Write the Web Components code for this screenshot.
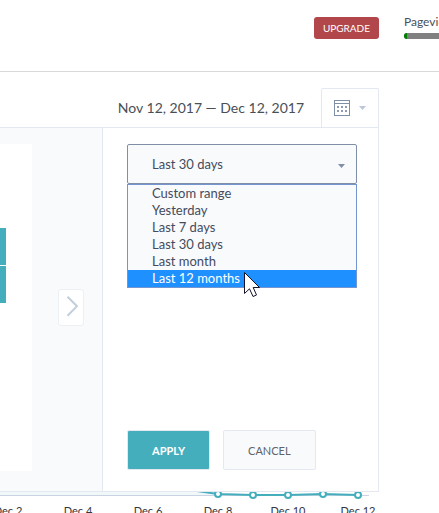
<!DOCTYPE html>
<html lang="en">
<head>
<meta charset="utf-8">
<meta name="viewport" content="width=device-width, initial-scale=1">
<title>Overview</title>
<style>
    html, body {
        margin: 0;
        min-height: 100%;
        overflow: hidden;
    }

    body {
        --line: #e3e8f1;
        --pale: #f8fafc;
        --teal: #45aebd;
        --slate: #7f8fa6;
        background: #fff;
        color: #4a4f57;
        font: 13px/17px Lato, "Open Sans", sans-serif;
    }
</style>
</head>
<body>
<app-topbar>
    <app-usage slot="usage" label="Pageviews" value="3"></app-usage>
</app-topbar>
<date-picker>
    <span slot="range">Nov 12, 2017 — Dec 12, 2017</span>
    <calendar-pane slot="calendar"></calendar-pane>
    <range-form slot="form"></range-form>
</date-picker>
<traffic-chart></traffic-chart>

<script>
function makeTemplate(html) {
    const template = document.createElement('template');
    template.innerHTML = html;
    return template;
}

class BaseElement extends HTMLElement {
    constructor() {
        super();
        this.attachShadow({mode: 'open'});
        this.shadowRoot.appendChild(this.constructor.template.content.cloneNode(true));
    }
}

class AppTopbar extends BaseElement {
    static template = makeTemplate(`
        <style>
            :host {
                display: flex;
                justify-content: flex-end;
                align-items: flex-start;
                gap: 25px;
                height: 54px;
                padding-top: 17px;
                border-bottom: 1px solid #d8dada;
                overflow: hidden;
            }

            button {
                height: 22px;
                padding: 0 9px;
                border: 0;
                border-radius: 3px;
                background: #b2474b;
                color: #fff;
                font: 10px/22px Lato, sans-serif;
                cursor: pointer;
            }

            .usage {
                width: 35px;
                margin-top: -4px;
            }
        </style>
        <button type="button">UPGRADE</button>
        <div class="usage"><slot name="usage"></slot></div>
    `);
}

class AppUsage extends BaseElement {
    static template = makeTemplate(`
        <style>
            :host {
                display: block;
                width: 160px;
            }

            label {
                display: block;
                font-size: 12px;
                line-height: 17px;
            }

            progress {
                appearance: none;
                display: block;
                width: 100%;
                height: 6px;
                margin-top: 3px;
                border: 0;
                border-radius: 3px;
                overflow: hidden;
            }

            progress::-webkit-progress-bar {background: #808080;}

            progress::-webkit-progress-value {background: #008000;}
        </style>
        <label for="used"></label>
        <progress id="used" max="160"></progress>
    `);

    connectedCallback() {
        this.shadowRoot.querySelector('label').textContent = this.getAttribute('label');
        this.shadowRoot.querySelector('progress').value = Number(this.getAttribute('value'));
    }
}

class DatePicker extends BaseElement {
    static template = makeTemplate(`
        <style>
            :host {
                display: block;
                position: relative;
                z-index: 1;
                margin: 16px 60px 0 0;
            }

            header {
                display: flex;
                justify-content: flex-end;
                align-items: center;
                gap: 17px;
                font-size: 14px;
                white-space: nowrap;
            }

            .toggle {
                display: flex;
                align-items: center;
                gap: 9px;
                height: 39px;
                padding: 0 12px;
                border: 1px solid var(--line);
                border-bottom: 0;
                border-radius: 2px 2px 0 0;
                background: #fff;
                cursor: pointer;
            }

            /* the panel floats above the chart */
            .panel {
                position: absolute;
                top: 100%;
                left: 0;
                right: 0;
                display: flex;
                border: 1px solid var(--line);
                border-left: 0;
                background: #fff;
            }

            slot[name="calendar"] {
                display: block;
                flex: 1;
                min-width: 0;
            }

            slot[name="form"] {
                display: block;
                border-left: 1px solid var(--line);
            }
        </style>
        <header>
            <slot name="range"></slot>
            <button class="toggle" type="button" aria-label="Choose dates">
                <svg width="16" height="16" viewBox="0 0 16 16" shape-rendering="crispEdges">
                    <path d="M.5 .5h15v15H.5zM0 3.500h16" fill="none" stroke="#7f8fa6"/>
                    <path d="M3 6h2v2H3zM7 6h2v2H7zM11 6h2v2h-2zM3 10h2v2H3zM7 10h2v2H7zM11 10h2v2h-2z" fill="#8d9bb0"/>
                </svg>
                <svg width="7" height="4" viewBox="0 0 7 4"><path d="M0 0h7L3.500 4z" fill="#bcc7d8"/></svg>
            </button>
        </header>
        <div class="panel">
            <slot name="calendar"></slot>
            <slot name="form"></slot>
        </div>
    `);
}

class CalendarPane extends BaseElement {
    static template = makeTemplate(`
        <style>
            :host {
                display: flex;
                align-items: center;
                justify-content: space-between;
                box-sizing: border-box;
                height: 100%;
                padding: 16px 18px 20px 0;
                background: var(--pale);
            }

            .month {
                display: flex;
                flex-direction: column;
                align-self: stretch;
                gap: 1px;
                flex: 1;
                margin-right: 26px;
                padding: 84px 26px 0 0;
                background: #fff;
            }

            .day {
                height: 37px;
                background: var(--teal);
            }

            button {
                width: 26px;
                height: 37px;
                padding: 0;
                border: 1px solid #edf0f5;
                border-radius: 3px;
                background: #fff;
                cursor: pointer;
            }

            svg {
                display: block;
                margin: auto;
            }
        </style>
        <div class="month">
            <div class="day"></div>
            <div class="day"></div>
        </div>
        <button type="button" aria-label="Next month">
            <svg width="14" height="23" viewBox="0 0 14 23"><path d="M3.500 .700l9.500 9.500L3.500 19.700" fill="none" stroke="#c3cedd" stroke-width="2"/></svg>
        </button>
    `);
}

class RangeForm extends BaseElement {
    static template = makeTemplate(`
        <style>
            :host {
                display: block;
                padding: 16px 21px 21px 24px;
            }

            form {
                display: flex;
                flex-direction: column;
                justify-content: space-between;
                min-height: 326px;
            }

            .preset {
                position: relative;
                width: 230px;
                color: #454a5c;
            }

            select {
                appearance: none;
                display: block;
                box-sizing: border-box;
                width: 100%;
                height: 40px;
                padding: 0 24px;
                border: 1px solid var(--slate);
                border-radius: 2px;
                background: var(--pale);
                color: inherit;
                font: inherit;
            }

            .arrow {
                position: absolute;
                top: 20px;
                right: 12px;
            }

            ul {
                position: absolute;
                top: 100%;
                left: 0;
                right: 0;
                margin: 0;
                padding: 0;
                border: 1px solid #7396d0;
                background: var(--pale);
                list-style: none;
            }

            li {
                padding-left: 24px;
                cursor: default;
            }

            li.active {
                background: #1e90ff;
                color: #fff;
            }

            .pointer {
                position: absolute;
                top: 128px;
                left: 117px;
            }

            .actions {
                display: flex;
                gap: 13px;
            }

            .actions button {
                height: 40px;
                padding: 0 24px;
                border: 1px solid var(--line);
                border-radius: 2px;
                background: var(--pale);
                color: #606468;
                font: 11px/17px Lato, sans-serif;
                cursor: pointer;
            }

            .actions .primary {
                background: var(--teal);
                color: #fff;
                font-weight: 700;
            }
        </style>
        <form>
            <div class="preset">
                <select aria-label="Date range">
                    <option>Custom range</option>
                    <option>Yesterday</option>
                    <option>Last 7 days</option>
                    <option selected>Last 30 days</option>
                    <option>Last month</option>
                    <option>Last 12 months</option>
                </select>
                <svg class="arrow" width="7" height="4" viewBox="0 0 7 4"><path d="M0 0h7L3.500 4z" fill="#7f8fa6"/></svg>
                <ul role="listbox" aria-label="Date range"></ul>
                <svg class="pointer" width="17" height="26" viewBox="0 0 17 26">
                    <path d="M.5 .5V21.500L5.500 16.800L9 24.500L12.500 23L9.200 15.500H15.500Z" fill="#fff" stroke="#14142a"/>
                </svg>
            </div>
            <div class="actions">
                <button class="primary" type="button">APPLY</button>
                <button type="button">CANCEL</button>
            </div>
        </form>
    `);

    connectedCallback() {
        const select = this.shadowRoot.querySelector('select');
        const list = this.shadowRoot.querySelector('ul');
        for (const option of select.options) {
            const item = document.createElement('li');
            item.setAttribute('role', 'option');
            item.textContent = option.text;
            item.addEventListener('mouseenter', () => this.activate(item));
            item.addEventListener('click', () => {select.value = option.value;});
            list.appendChild(item);
        }
        this.activate(list.lastElementChild);
    }

    activate(item) {
        for (const other of item.parentNode.children) {
            other.classList.toggle('active', other === item);
        }
    }
}

class TrafficChart extends BaseElement {
    static template = makeTemplate(`
        <style>
            :host {
                display: flex;
                flex-direction: column;
                align-items: flex-end;
                padding: 359px 46px 0 0;
                overflow: hidden;
            }

            svg {
                display: block;
                margin-right: 23px;
            }

            .labels {
                display: flex;
                color: #33353f;
                font-size: 11px;
                line-height: 17px;
                margin-top: 1px;
            }

            .labels span {
                width: 70px;
                text-align: center;
            }
        </style>
        <svg width="420" height="15" viewBox="-50 0 420 15">
            <path d="M-50 3H190L218 8V9H-50z" fill="#f1f8fa"/>
            <path d="M-50 9.500H369" stroke="#c9d3e3"/>
            <g fill="#fff" stroke="#45aebd" stroke-width="2">
                <path d="M190 4L218 8L253 9H288L323 8L358 9" fill="none"/>
                <circle cx="218" cy="8" r="3"/>
                <circle cx="253" cy="9" r="3"/>
                <circle cx="288" cy="9" r="3"/>
                <circle cx="323" cy="8" r="3"/>
                <circle cx="358" cy="9" r="3"/>
            </g>
        </svg>
        <div class="labels">
            <span>Dec 2</span>
            <span>Dec 4</span>
            <span>Dec 6</span>
            <span>Dec 8</span>
            <span>Dec 10</span>
            <span>Dec 12</span>
        </div>
    `);
}

window.customElements.define('app-topbar', AppTopbar);
window.customElements.define('app-usage', AppUsage);
window.customElements.define('date-picker', DatePicker);
window.customElements.define('calendar-pane', CalendarPane);
window.customElements.define('range-form', RangeForm);
window.customElements.define('traffic-chart', TrafficChart);
</script>
</body>
</html>
